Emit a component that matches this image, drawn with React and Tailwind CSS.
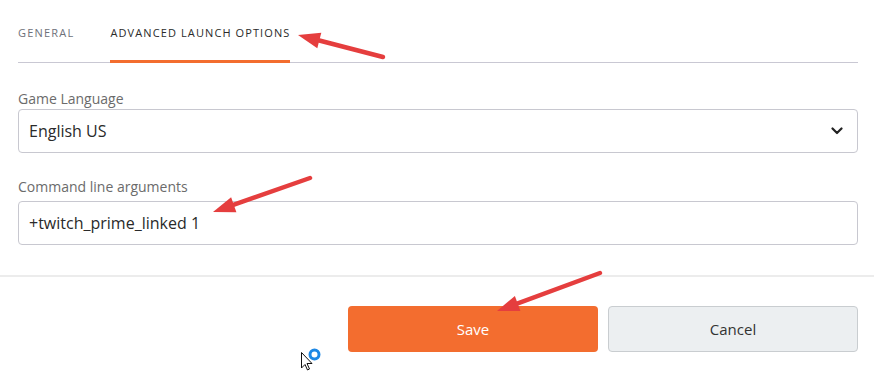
import React from "react";

const RED = "#e53e3e";

// annotation arrow drawn from tail to tip
const Arrow = ({ x1, y1, x2, y2 }) => {
  const dx = x2 - x1;
  const dy = y2 - y1;
  const len = Math.hypot(dx, dy);
  const ux = dx / len;
  const uy = dy / len;
  const head = 22;
  const half = 8;
  const bx = x2 - ux * head;
  const by = y2 - uy * head;
  const nx = -uy;
  const ny = ux;
  const pts = `${x2},${y2} ${bx + nx * half},${by + ny * half} ${bx - nx * half},${by - ny * half}`;
  return (
    <g>
      <line
        x1={x1}
        y1={y1}
        x2={bx + ux * 2}
        y2={by + uy * 2}
        stroke={RED}
        strokeWidth="4.5"
        strokeLinecap="round"
      />
      <polygon points={pts} fill={RED} />
    </g>
  );
};

const App = () => {
  return (
    <div
      className="relative w-[874px] h-[371px] bg-white overflow-hidden"
      style={{ fontFamily: "'Open Sans', 'Noto Sans', sans-serif" }}
    >
      {/* Tabs */}
      <div className="ml-[18px] mr-[16px] flex gap-[36px] border-b border-[#c9c8d3]">
        <div className="pt-[26px] pb-[20px] leading-[14px] text-[11px] font-medium tracking-[0.11em] text-[#6e717a]">
          GENERAL
        </div>
        <div className="-mb-px pt-[26px] pb-[20px] leading-[14px] text-[11px] font-medium tracking-[0.1em] text-[#2b2b2b] border-b-[3px] border-[#f36d2f]">
          ADVANCED LAUNCH OPTIONS
        </div>
      </div>

      {/* Form */}
      <div className="pl-[18px] pr-[16px] pt-[26px]">
        <label className="block text-[14px] leading-[20px] text-[#6b6b6b]">
          Game Language
        </label>
        <div className="flex items-center justify-between h-[44px] rounded-[4px] border border-[#c8c8d0] pl-[10px] pr-[14px]">
          <span className="text-[16px] text-[#2a2a2a]">English US</span>
          <svg width="12" height="8" viewBox="0 0 12 8">
            <path
              d="M1.5 1.5 L6 6 L10.5 1.5"
              fill="none"
              stroke="#222"
              strokeWidth="2.2"
              strokeLinecap="round"
              strokeLinejoin="round"
            />
          </svg>
        </div>

        <label className="block mt-[24px] mb-[4px] text-[14px] leading-[20px] text-[#6b6b6b]">
          Command line arguments
        </label>
        <div className="flex items-center h-[44px] rounded-[4px] border border-[#c8c8d0] pl-[10px]">
          <span className="text-[16px] text-[#2a2a2a]">+twitch_prime_linked 1</span>
        </div>
      </div>

      <div className="mt-[30px] border-t-2 border-[#ececec]" />

      {/* Actions */}
      <div className="flex justify-end gap-[10px] pr-[16px] pt-[29px]">
        <button className="w-[250px] h-[46px] rounded-[4px] bg-[#f36d2f] text-white text-[15px] font-medium">
          Save
        </button>
        <button className="w-[250px] h-[46px] rounded-[4px] bg-[#eceff1] border border-[#c9cdd0] text-[#333] text-[15px]">
          Cancel
        </button>
      </div>

      {/* Annotations */}
      <svg className="absolute inset-0 pointer-events-none" width="874" height="371">
        <Arrow x1={383} y1={57} x2={298} y2={35} />
        <Arrow x1={310} y1={178} x2={213} y2={212} />
        <Arrow x1={600} y1={273} x2={497} y2={311} />
        {/* mouse cursor */}
        <path
          d="M301.5 352.5 L301.5 368 L305 364.5 L307.5 370 L309.5 369 L307 363.5 L312 363.5 Z"
          fill="#fff"
          stroke="#111"
          strokeWidth="1"
          strokeLinejoin="round"
        />
        <circle cx="314.5" cy="354.5" r="4.5" fill="none" stroke="#1e88e5" strokeWidth="3" />
      </svg>
    </div>
  );
};

export default App;
